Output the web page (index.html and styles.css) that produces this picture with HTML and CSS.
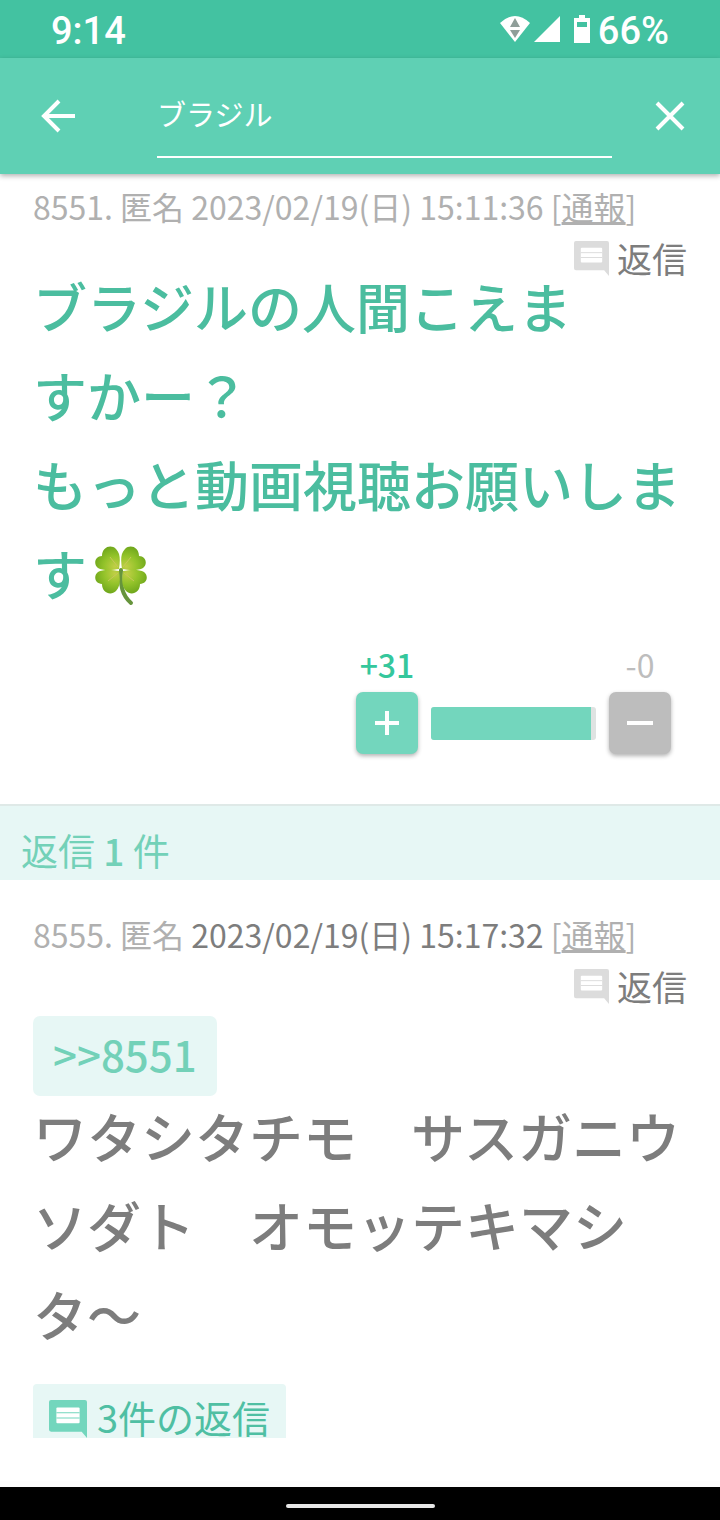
FILE: index.html
```
<!DOCTYPE html>
<html lang="ja">

<head>
    <meta charset="UTF-8">
    <meta name="viewport" content="width=device-width, initial-scale=1.0">
    <title>ブラジル</title>
    <link rel="stylesheet" href="styles.css">
</head>

<body>
    <svg width="0" height="0" class="defs">
        <symbol id="comment" viewBox="0 0 36 36">
            <path fill="currentColor" d="M2 0h32q2 0 2 2v34l-5-6H2q-2 0-2-2V2q0-2 2-2z" />
            <rect x="7" y="7" width="22" height="15" rx="1" fill="#fff" />
            <path stroke="currentColor" stroke-width="1" d="M7 12h22M7 17h22" />
        </symbol>
    </svg>

    <div class="status">
        <span>9:14</span>
        <div class="status-icons">
            <svg width="30" height="26" viewBox="0 0 30 26">
                <path fill="#fff" d="M0 7Q15-7 30 7L15 26z" />
                <path fill="#8f9e99" d="M15 2l5 9H10zM10 14h10l-5 8z" />
            </svg>
            <svg width="26" height="26" viewBox="0 0 26 26">
                <path fill="#fff" d="M26 0v26H0z" />
            </svg>
            <svg class="battery" width="16" height="28" viewBox="0 0 16 28">
                <path fill="#fff" fill-rule="evenodd" d="M5 0h6v3h5v25H0V3h5zM3 7v5h10V7z" />
            </svg>
            <span>66%</span>
        </div>
    </div>

    <header class="bar">
        <button class="icon-btn" aria-label="戻る">
            <svg width="34" height="34" viewBox="0 0 34 34" fill="none" stroke="#fff" stroke-width="4">
                <path d="M34 17H3M18 2L3 17l15 15" />
            </svg>
        </button>
        <input class="search" type="text" value="ブラジル" aria-label="検索">
        <button class="icon-btn" aria-label="閉じる">
            <svg width="30" height="30" viewBox="0 0 30 30" stroke="#fff" stroke-width="4">
                <path d="M2 2l26 26M28 2L2 28" />
            </svg>
        </button>
    </header>

    <main>
        <article class="post post-first">
            <div class="meta">8551. 匿名 2023/02/19(日) 15:11:36 [<a href="#">通報</a>]</div>
            <div class="reply">
                <button class="reply-btn"><svg width="35" height="35"><use href="#comment" /></svg>返信</button>
            </div>
            <p class="text text-green">ブラジルの人聞こえま<br>すかー？<br>もっと動画視聴お願いします<svg class="clover" role="img" aria-label="四つ葉のクローバー" width="54" height="62" viewBox="0 0 54 62">
                    <defs>
                        <radialGradient id="leaf" cx="0.8" cy="0.85" r="0.9">
                            <stop offset="0" stop-color="#c0cf45" />
                            <stop offset="0.5" stop-color="#93c32a" />
                            <stop offset="1" stop-color="#6da51b" />
                        </radialGradient>
                        <path id="petal" fill="url(#leaf)" d="M25 24C19 25 9 26 4 23C-1 19 1 11 8 11C8 2 17-1 22 4C27 9 26 17 25 24z" />
                    </defs>
                    <path fill="none" stroke="#66943c" stroke-width="4" stroke-linecap="round" d="M27 25C26 40 28 50 37 58" />
                    <use href="#petal" />
                    <use href="#petal" transform="matrix(-1 0 0 1 53 0)" />
                    <use href="#petal" transform="matrix(1 0 0 -1 0 50)" />
                    <use href="#petal" transform="matrix(-1 0 0 -1 54 50)" />
                    <path fill="none" stroke="#c6c85a" stroke-width="1" d="M24 22l-8-10M29 22l8-10M24 28l-10 8M30 28l10 8" />
                </svg></p>
            <div class="votes">
                <span class="count count-plus">+31</span>
                <span></span>
                <span class="count count-minus">-0</span>
                <button class="vote vote-plus" aria-label="プラス">
                    <svg width="26" height="26" viewBox="0 0 26 26" stroke="#fff" stroke-width="4">
                        <path d="M1 13h24M13 1v24" />
                    </svg>
                </button>
                <div class="gauge">
                    <div class="gauge-fill" style="width: 97%"></div>
                </div>
                <button class="vote vote-minus" aria-label="マイナス">
                    <svg width="26" height="26" viewBox="0 0 26 26" stroke="#fff" stroke-width="4">
                        <path d="M0 13h26" />
                    </svg>
                </button>
            </div>
        </article>

        <h2 class="replies-title">返信 <b>1</b> 件</h2>

        <article class="post post-reply">
            <div class="meta">8555. 匿名 <span class="date">2023/02/19(日) 15:17:32</span> [<a href="#">通報</a>]</div>
            <div class="reply">
                <button class="reply-btn"><svg width="35" height="35"><use href="#comment" /></svg>返信</button>
            </div>
            <a class="anchor" href="#">&gt;&gt;8551</a>
            <p class="text">ワタシタチモ　サスガニウソダト　オモッテキマシタ〜</p>
            <button class="more"><svg width="38" height="38"><use href="#comment" /></svg>3件の返信</button>
        </article>
    </main>

    <div class="nav">
        <div class="nav-pill"></div>
    </div>
</body>

</html>
```
FILE: styles.css
```
* {
    box-sizing: border-box;
}

body {
    margin: 0;
    min-height: 100vh;
    display: flex;
    flex-direction: column;
    background: #fff;
    color: #7d7d7d;
    font-family: "Noto Sans CJK JP", sans-serif;
}

button {
    border: 0;
    padding: 0;
    background: none;
    font-family: inherit;
    color: inherit;
}

svg {
    display: block;
    flex: none;
}

.defs {
    position: absolute;
}

.status {
    height: 58px;
    padding: 4px 51px 0;
    display: flex;
    align-items: center;
    justify-content: space-between;
    background: #43c2a1;
    color: #fff;
    font: 500 38px Roboto, sans-serif;
}

.status-icons {
    display: flex;
    align-items: center;
    gap: 4px;
}

.status-icons svg {
    margin-bottom: 4px;
}

.status-icons .battery {
    margin-left: 10px;
    margin-right: 4px;
}

.bar {
    height: 116px;
    padding: 0 35px 0 41px;
    display: flex;
    align-items: center;
    justify-content: space-between;
    background: #5fd0b4;
    box-shadow: 0 2px 5px rgba(0, 0, 0, 0.3);
}

.search {
    flex: 1;
    min-width: 0;
    height: 84px;
    margin: 0 43px 0 82px;
    padding: 0 0 4px;
    border: 0;
    border-bottom: 2px solid #fff;
    background: none;
    color: #fff;
    font: 29px "Noto Sans CJK JP", sans-serif;
    outline: none;
}

main {
    flex: 1;
    border-bottom: 6px solid #fdfdfd;
}

.post {
    padding: 0 33px;
}

.post-first {
    padding-top: 8px;
    padding-bottom: 50px;
}

.post-reply {
    padding-top: 30px;
}

.meta {
    color: #b0b0b0;
    font-size: 32px;
    line-height: 48px;
}

.meta a {
    color: inherit;
}

.date {
    color: #7d7d7d;
}

.reply {
    display: flex;
    justify-content: flex-end;
    margin: 12px 0 -13px;
}

.reply-btn {
    height: 32px;
    display: flex;
    align-items: center;
    gap: 8px;
    font-size: 35px;
    line-height: 30px;
}

.reply-btn svg {
    color: #dcdcdc;
}

.text {
    margin: 0;
    font-size: 54px;
    font-weight: 500;
    line-height: 89px;
}

.text-green {
    color: #4bbd9f;
}

.clover {
    display: inline-block;
    margin: 0 0 10px 7px;
    vertical-align: middle;
}

.votes {
    display: grid;
    grid-template-columns: 62px 165px 62px;
    justify-content: end;
    gap: 13px;
    align-items: center;
    padding: 31px 16px 0 0;
}

.count {
    height: 31px;
    text-align: center;
    font-size: 32px;
    line-height: 32px;
}

.count-plus {
    color: #35c79c;
    font-weight: 500;
}

.count-minus {
    color: #bdbdbd;
}

.vote {
    height: 62px;
    display: flex;
    align-items: center;
    justify-content: center;
    border-radius: 7px;
    box-shadow: 0 2px 4px rgba(0, 0, 0, 0.3);
}

.vote-plus {
    background: #73d6bd;
}

.vote-minus {
    background: #bdbdbd;
}

.gauge {
    height: 33px;
    border-radius: 3px;
    background: #dfe3e2;
    overflow: hidden;
}

.gauge-fill {
    height: 100%;
    background: #73d6bd;
}

.replies-title {
    height: 76px;
    margin: 0;
    padding: 16px 21px 0;
    border-top: 2px solid #dfe9e7;
    background: #e7f7f5;
    color: #73d1b8;
    font-size: 37px;
    font-weight: 400;
    line-height: 56px;
}

.replies-title b {
    font-weight: 500;
}

.anchor {
    display: block;
    width: fit-content;
    margin: 27px 0 -5px;
    padding: 0 20px 4px;
    border-radius: 7px;
    background: #e7f7f5;
    color: #73d1b8;
    font-size: 42px;
    font-weight: 500;
    line-height: 76px;
    text-decoration: none;
}

.more {
    height: 54px;
    margin-top: 26px;
    padding: 16px 16px 0;
    display: flex;
    align-items: flex-start;
    gap: 10px;
    border-radius: 4px 4px 0 0;
    background: #e7f7f5;
    color: #4fbfa3;
    font-size: 38px;
    line-height: 34px;
}

.more svg {
    color: #73d6bd;
}

.nav {
    height: 33px;
    padding-top: 5px;
    display: flex;
    align-items: center;
    justify-content: center;
    background: #000;
}

.nav-pill {
    width: 149px;
    height: 4px;
    border-radius: 2px;
    background: #e8e8e8;
}
```
